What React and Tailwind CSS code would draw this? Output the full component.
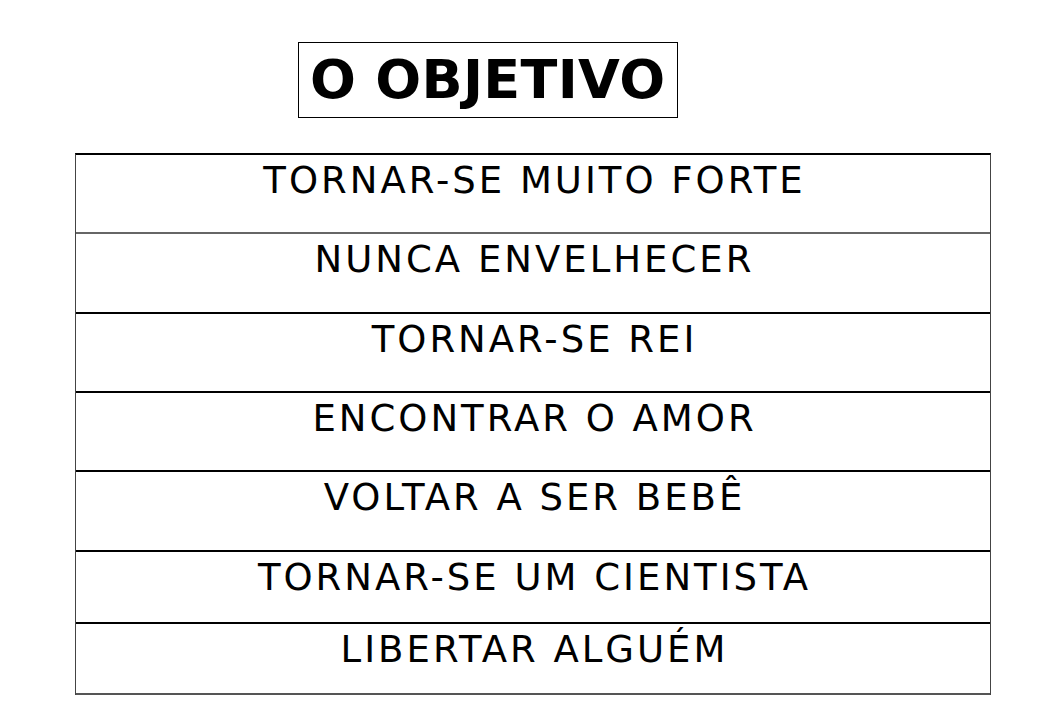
import React from "react";

const rows = [
  { text: "TORNAR-SE MUITO FORTE", h: "h-[79px]", line: "border-b-[#666]" },
  { text: "NUNCA ENVELHECER", h: "h-[80px]", line: "border-b-black" },
  { text: "TORNAR-SE REI", h: "h-[79px]", line: "border-b-black" },
  { text: "ENCONTRAR O AMOR", h: "h-[79px]", line: "border-b-black" },
  { text: "VOLTAR A SER BEBÊ", h: "h-[80px]", line: "border-b-black" },
  { text: "TORNAR-SE UM CIENTISTA", h: "h-[72px]", line: "border-b-black" },
  { text: "LIBERTAR ALGUÉM", h: "h-[71px]", line: "border-b-[#555]" },
];

const App = () => {
  return (
    <div
      className="w-[1040px] h-[720px] bg-white text-black overflow-hidden"
      style={{ fontFamily: '"DejaVu Sans", "Liberation Sans", sans-serif' }}
    >
      <div className="pt-[42px] pl-[298px]">
        <div className="w-[380px] h-[76px] border border-black flex items-center pl-[11px]">
          <h1 className="text-[54px] font-bold leading-none tracking-[0.3px]">O OBJETIVO</h1>
        </div>
      </div>

      <div className="mt-[35px] ml-[75px] w-[916px] border-t-2 border-t-black border-x border-x-[#444]">
        {rows.map((row) => (
          <div
            key={row.text}
            className={`${row.h} ${row.line} border-b-2 flex justify-center pt-[6px]`}
          >
            <span className="text-[37px] leading-[40px] tracking-[3px] pl-[3px]">{row.text}</span>
          </div>
        ))}
      </div>
    </div>
  );
};

export default App;
